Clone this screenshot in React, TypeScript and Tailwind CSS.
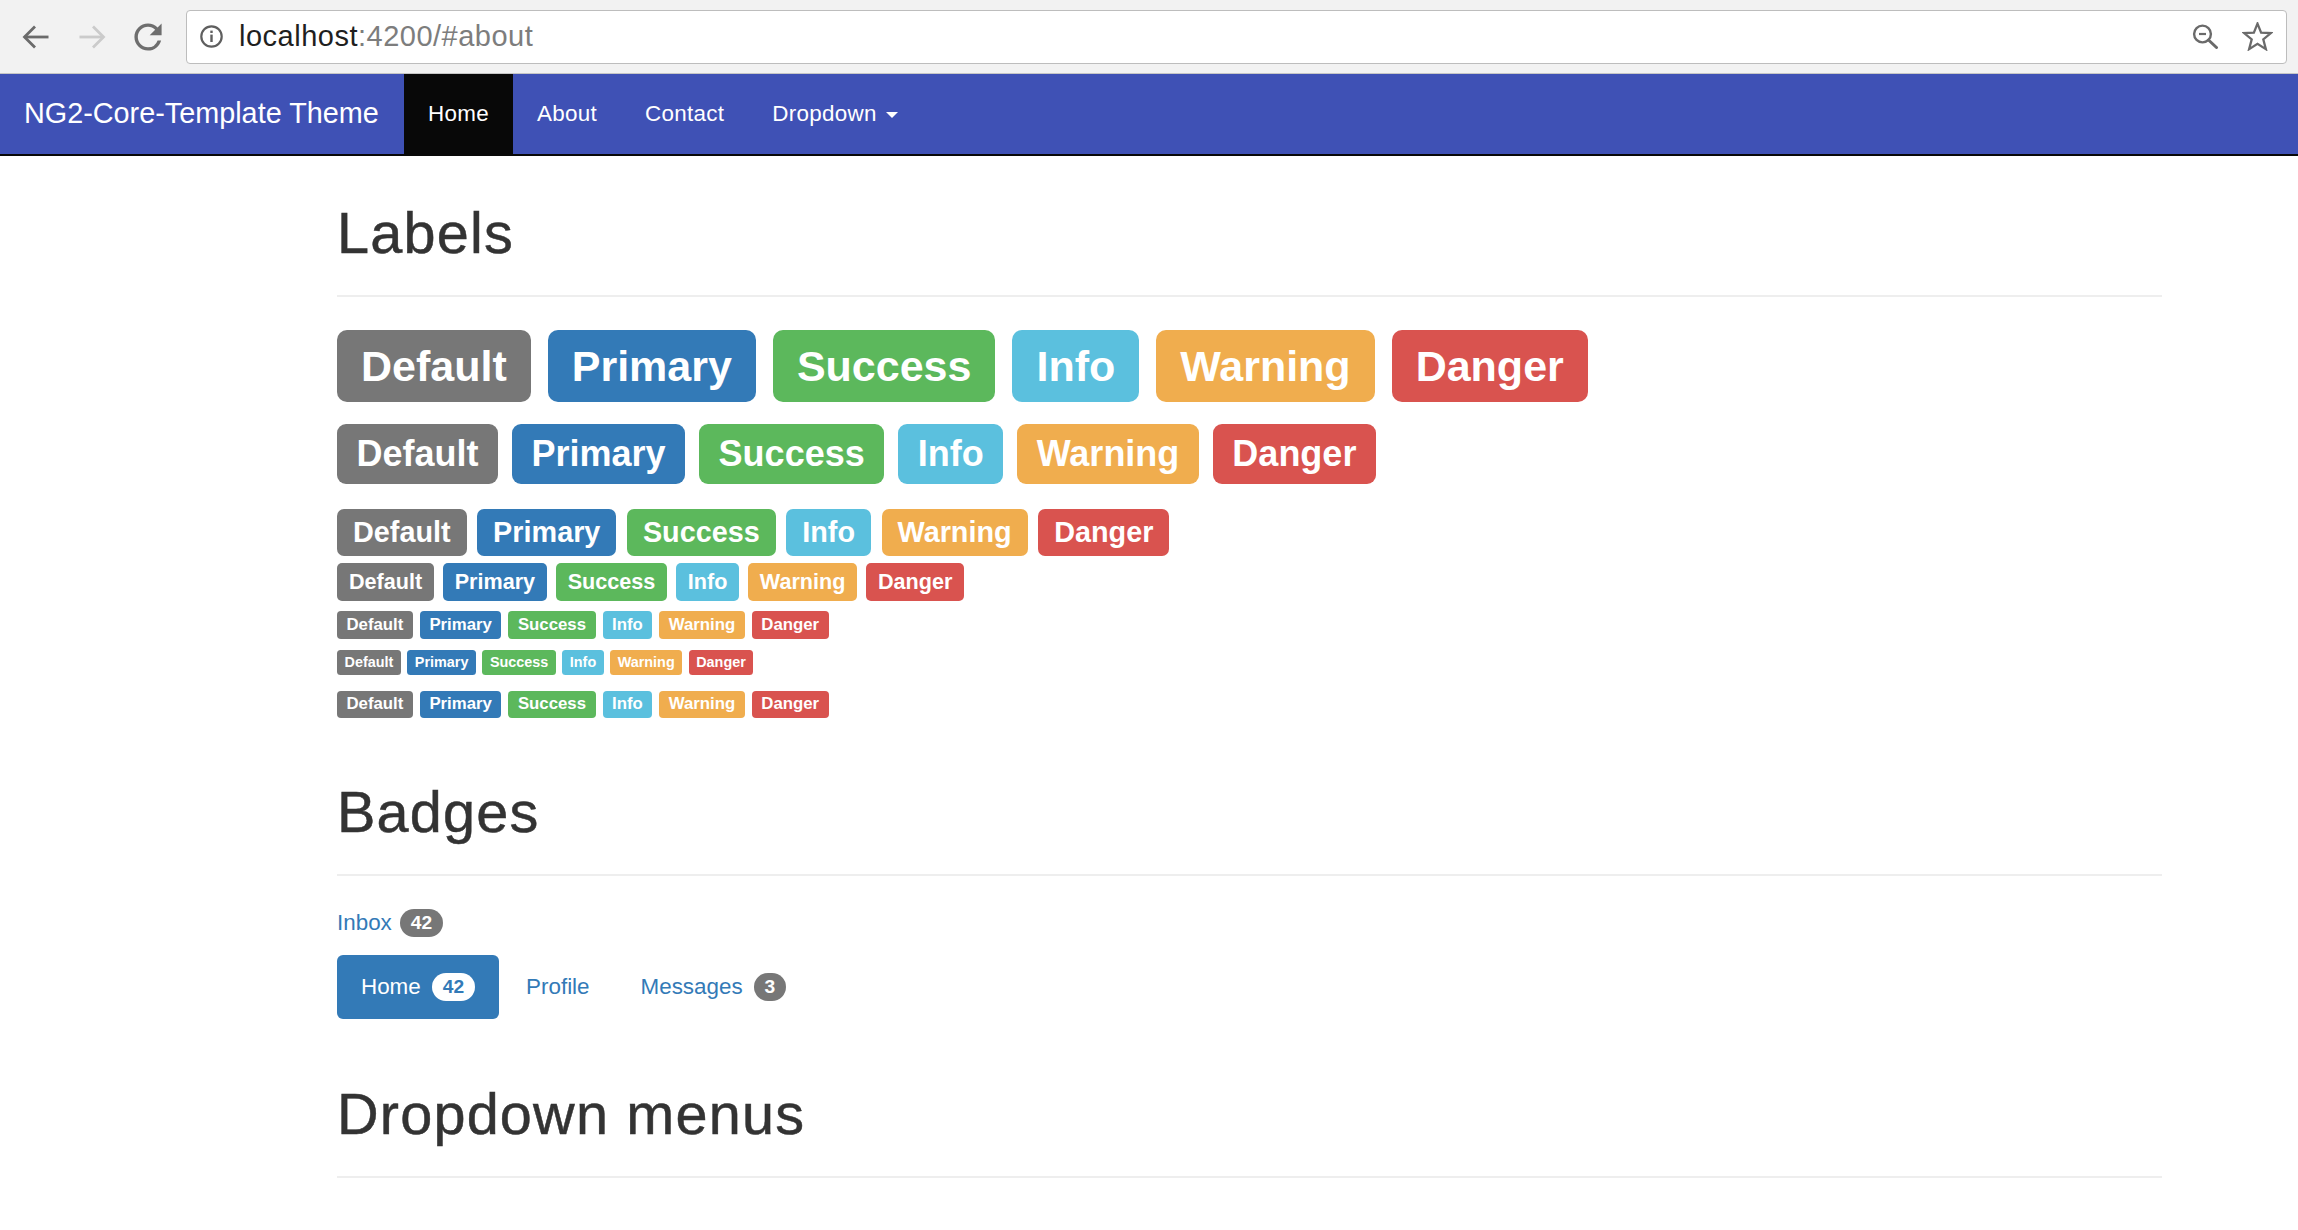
import React from 'react'

type Kind = 'Default' | 'Primary' | 'Success' | 'Info' | 'Warning' | 'Danger'

const kinds: { name: Kind; bg: string }[] = [
  { name: 'Default', bg: 'bg-[#777777]' },
  { name: 'Primary', bg: 'bg-[#337ab7]' },
  { name: 'Success', bg: 'bg-[#5cb85c]' },
  { name: 'Info', bg: 'bg-[#5bc0de]' },
  { name: 'Warning', bg: 'bg-[#f0ad4e]' },
  { name: 'Danger', bg: 'bg-[#d9534f]' },
]

// one row per heading level of the demo (h1 .. h6), then a plain paragraph
const labelRows = [
  { row: 'mt-[33px] gap-[17px]', label: 'h-[72px] px-[24px] text-[43px] rounded-[10px]' },
  { row: 'mt-[22px] gap-[14px]', label: 'h-[60px] px-[19.5px] text-[36px] rounded-[9px]' },
  { row: 'mt-[25px] gap-[10.5px]', label: 'h-[47px] px-[16px] text-[28.8px] rounded-[7px]' },
  { row: 'mt-[7px] gap-[8.5px]', label: 'h-[38px] px-[12px] text-[21.6px] rounded-[5px]' },
  { row: 'mt-[10px] gap-[7px]', label: 'h-[28px] px-[9.5px] text-[16.8px] rounded-[4px]' },
  { row: 'mt-[11px] gap-[6.5px]', label: 'h-[25px] px-[7.5px] text-[14.4px] rounded-[3.5px]' },
  { row: 'mt-[16px] gap-[7px]', label: 'h-[27px] px-[9.5px] text-[16.8px] rounded-[4px]' },
]

function BackIcon({ color }: { color: string }) {
  return (
    <svg width="40" height="40" viewBox="0 0 40 40" fill="none" stroke={color} strokeWidth="2.8">
      <path d="M32.5 20H8.5" />
      <path d="M19 9.5L8.5 20L19 30.5" />
    </svg>
  )
}

function ForwardIcon({ color }: { color: string }) {
  return (
    <svg width="40" height="40" viewBox="0 0 40 40" fill="none" stroke={color} strokeWidth="2.8">
      <path d="M7.5 20H31.5" />
      <path d="M21 9.5L31.5 20L21 30.5" />
    </svg>
  )
}

function ReloadIcon() {
  return (
    <div className="flex h-[40px] w-[40px] items-center justify-center">
      <svg width="34" height="34" viewBox="2 2 20 20" fill="#6e6e6e">
        <path d="M17.65 6.35A7.958 7.958 0 0 0 12 4c-4.42 0-7.99 3.58-7.99 8s3.57 8 7.99 8c3.73 0 6.84-2.55 7.73-6h-2.08A5.99 5.99 0 0 1 12 18c-3.31 0-6-2.69-6-6s2.69-6 6-6c1.66 0 3.14.69 4.22 1.78L13 11h7V4l-2.35 2.35z" />
      </svg>
    </div>
  )
}

function InfoIcon() {
  return (
    <svg width="23" height="23" viewBox="0 0 23 23" fill="none">
      <circle cx="11.5" cy="11.5" r="10.2" stroke="#5f5f5f" strokeWidth="2.2" />
      <rect x="10.3" y="9.6" width="2.4" height="7.4" fill="#5f5f5f" />
      <rect x="10.3" y="5.6" width="2.4" height="2.4" fill="#5f5f5f" />
    </svg>
  )
}

function ZoomOutIcon() {
  return (
    <svg width="27" height="25" viewBox="0 0 27 25" fill="none" stroke="#6a6a6a">
      <circle cx="10.5" cy="10" r="8.4" strokeWidth="2.4" />
      <path d="M7 10H14" strokeWidth="2.2" />
      <path d="M16.5 16L24.5 23.5" strokeWidth="3" strokeLinecap="round" />
    </svg>
  )
}

function StarIcon() {
  return (
    <svg width="31" height="29" viewBox="0 0 30 28" fill="none" stroke="#6a6a6a" strokeWidth="2.2">
      <polygon points="15,1.5 18.5,10.2 28,10.7 20.6,16.8 23.1,26.2 15,21 6.9,26.2 9.4,16.8 2,10.7 11.5,10.2" />
    </svg>
  )
}

function PageHeader({ title, className }: { title: string; className: string }) {
  return (
    <div className={`border-b-2 border-[#eeeeee] pb-[14px] ${className}`}>
      <h1 className="mb-[16px] text-[57.6px] leading-[63px] tracking-[1.2px] text-[#333333] [-webkit-text-stroke:0.5px_#333333]">
        {title}
      </h1>
    </div>
  )
}

function Badge({ children, className }: { children: React.ReactNode; className: string }) {
  return (
    <span className={`flex h-[28px] items-center rounded-full px-[11px] text-[19.2px] font-bold leading-none ${className}`}>
      {children}
    </span>
  )
}

export default function App() {
  return (
    <div className="min-h-screen bg-white font-['Liberation_Sans',Arial,sans-serif] text-[#333333]">
      {/* Browser toolbar */}
      <div className="flex h-[74px] items-center border-b border-[#c6c6c6] bg-[#f2f2f2] pl-[16px] pr-[11px]">
        <div className="flex gap-[16px]">
          <BackIcon color="#6b6b6b" />
          <ForwardIcon color="#cbcbcb" />
          <ReloadIcon />
        </div>
        <div className="ml-[18px] flex h-[54px] flex-1 items-center rounded-[4px] border border-[#bdbdbd] bg-white pl-[13px] pr-[13px]">
          <InfoIcon />
          <span className="ml-[16px] text-[29px] leading-none tracking-[0.5px] text-[#1f1f1f]">
            localhost<span className="text-[#7d7d7d]">:4200/#about</span>
          </span>
          <div className="flex-1" />
          <ZoomOutIcon />
          <div className="ml-[23px]">
            <StarIcon />
          </div>
        </div>
      </div>

      {/* Navbar */}
      <nav className="flex h-[82px] border-b-2 border-[#080808] bg-[#3f51b5] text-white">
        <a className="flex w-[404px] items-center pl-[24px] text-[28.8px]">NG2-Core-Template Theme</a>
        <ul className="flex text-[22.4px] tracking-[0.3px]">
          <li className="flex items-center bg-[#080808] px-[24px]">Home</li>
          <li className="flex items-center px-[24px]">About</li>
          <li className="flex items-center px-[24px]">Contact</li>
          <li className="flex items-center px-[24px]">
            Dropdown
            <span className="ml-[9px] mt-[2px] border-x-[6px] border-t-[6px] border-x-transparent border-t-white" />
          </li>
        </ul>
      </nav>

      <main className="pl-[337px] pr-[136px]">
        {/* Labels */}
        <PageHeader title="Labels" className="mt-[46px]" />
        {labelRows.map((r, i) => (
          <div key={i} className={`flex ${r.row}`}>
            {kinds.map((k) => (
              <span
                key={k.name}
                className={`flex items-center font-bold leading-none text-white ${k.bg} ${r.label}`}
              >
                {k.name}
              </span>
            ))}
          </div>
        ))}

        {/* Badges */}
        <PageHeader title="Badges" className="mt-[63px]" />
        <p className="mt-[31px] flex h-[32px] items-center text-[22.4px] text-[#337ab7]">
          Inbox
          <Badge className="ml-[8px] bg-[#777777] text-white">42</Badge>
        </p>
        <ul className="mt-[16px] flex text-[22.4px]">
          <li className="flex h-[64px] items-center rounded-[6px] bg-[#337ab7] px-[24px] text-white">
            Home
            <Badge className="ml-[11px] bg-white text-[#337ab7]">42</Badge>
          </li>
          <li className="ml-[3px] flex h-[64px] items-center px-[24px] text-[#337ab7]">Profile</li>
          <li className="ml-[3px] flex h-[64px] items-center px-[24px] text-[#337ab7]">
            Messages
            <Badge className="ml-[11px] bg-[#777777] text-white">3</Badge>
          </li>
        </ul>

        {/* Dropdown menus */}
        <PageHeader title="Dropdown menus" className="mt-[64px]" />
      </main>
    </div>
  )
}
